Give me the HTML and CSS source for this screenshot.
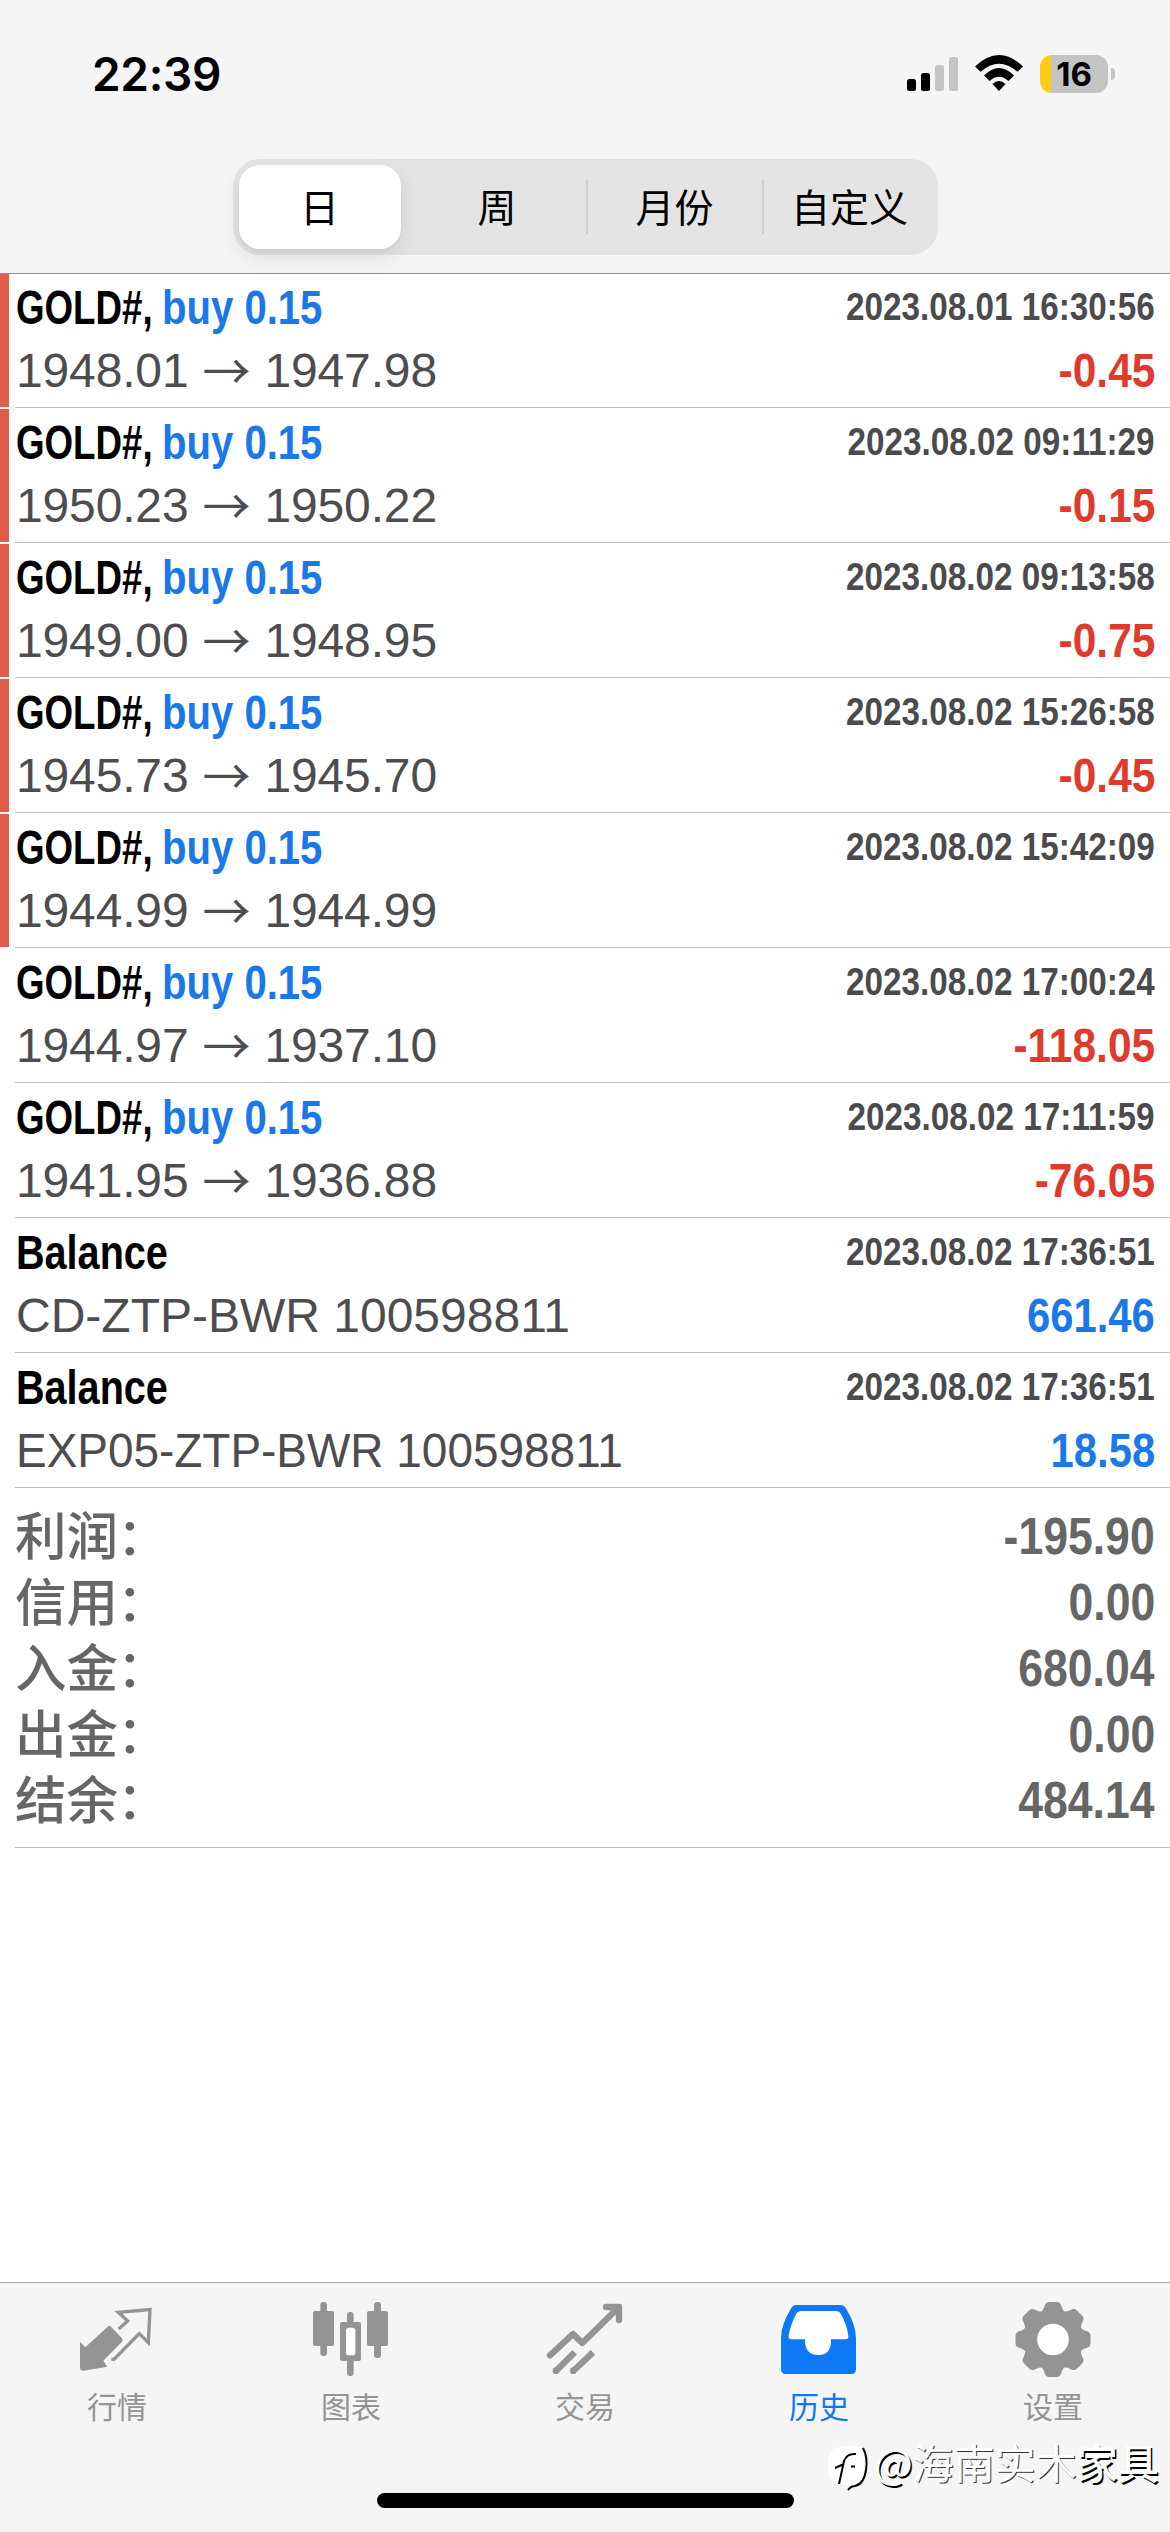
FILE: index.html
```html
<!DOCTYPE html>
<html lang="zh-CN">
<head>
<meta charset="utf-8">
<title>历史</title>
<link rel="stylesheet" href="styles.css">
</head>
<body>
<div class="screen">
  <header class="header">
    <div class="status">
      <span class="clock">22:39</span>
      <div class="status-icons">
        <svg class="signal" viewBox="0 0 51 34"><rect x="0" y="22" width="9" height="12" rx="2.5"/><rect x="14" y="16" width="9" height="18" rx="2.5"/><g fill="#c4c4c4"><rect x="28" y="8" width="9" height="26" rx="2.5"/><rect x="42" y="0" width="9" height="34" rx="2.5"/></g></svg>
        <svg class="wifi" viewBox="0 0 48 36"><path d="M0 11.5 Q24 -11.500 48 11.500 L42.500 16.800 Q24 0.500 5.500 16.800 Z"/><path d="M9 20.500 Q24 5.500 39 20.500 L33.500 26 Q24 17.500 14.500 26 Z"/><path d="M17.500 29 Q24 23 30.500 29 L24 36 Z"/></svg>
        <div class="battery"><span class="battery-body">16</span><i class="battery-nub"></i></div>
      </div>
    </div>
    <nav class="segments">
      <span class="segment selected">日</span>
      <span class="segment">周</span>
      <span class="segment divided">月份</span>
      <span class="segment divided">自定义</span>
    </nav>
  </header>

  <main class="list">
    <article class="row flagged"><div class="line"><span class="symbol">GOLD#,</span><span class="side">buy 0.15</span><time class="date">2023.08.01 16:30:56</time></div><div class="line"><span class="price">1948.01<i class="arrow">→</i>1947.98</span><span class="profit loss">-0.45</span></div></article>
    <article class="row flagged"><div class="line"><span class="symbol">GOLD#,</span><span class="side">buy 0.15</span><time class="date">2023.08.02 09:11:29</time></div><div class="line"><span class="price">1950.23<i class="arrow">→</i>1950.22</span><span class="profit loss">-0.15</span></div></article>
    <article class="row flagged"><div class="line"><span class="symbol">GOLD#,</span><span class="side">buy 0.15</span><time class="date">2023.08.02 09:13:58</time></div><div class="line"><span class="price">1949.00<i class="arrow">→</i>1948.95</span><span class="profit loss">-0.75</span></div></article>
    <article class="row flagged"><div class="line"><span class="symbol">GOLD#,</span><span class="side">buy 0.15</span><time class="date">2023.08.02 15:26:58</time></div><div class="line"><span class="price">1945.73<i class="arrow">→</i>1945.70</span><span class="profit loss">-0.45</span></div></article>
    <article class="row flagged"><div class="line"><span class="symbol">GOLD#,</span><span class="side">buy 0.15</span><time class="date">2023.08.02 15:42:09</time></div><div class="line"><span class="price">1944.99<i class="arrow">→</i>1944.99</span></div></article>
    <article class="row"><div class="line"><span class="symbol">GOLD#,</span><span class="side">buy 0.15</span><time class="date">2023.08.02 17:00:24</time></div><div class="line"><span class="price">1944.97<i class="arrow">→</i>1937.10</span><span class="profit loss">-118.05</span></div></article>
    <article class="row"><div class="line"><span class="symbol">GOLD#,</span><span class="side">buy 0.15</span><time class="date">2023.08.02 17:11:59</time></div><div class="line"><span class="price">1941.95<i class="arrow">→</i>1936.88</span><span class="profit loss">-76.05</span></div></article>
    <article class="row"><div class="line"><span class="balance">Balance</span><time class="date">2023.08.02 17:36:51</time></div><div class="line"><span class="note">CD-ZTP-BWR 100598811</span><span class="profit gain">661.46</span></div></article>
    <article class="row"><div class="line"><span class="balance">Balance</span><time class="date">2023.08.02 17:36:51</time></div><div class="line"><span class="note tight">EXP05-ZTP-BWR 100598811</span><span class="profit gain">18.58</span></div></article>
    <dl class="summary">
      <div class="total"><dt>利润<span class="colon">：</span></dt><dd>-195.90</dd></div>
      <div class="total"><dt>信用<span class="colon">：</span></dt><dd>0.00</dd></div>
      <div class="total"><dt>入金<span class="colon">：</span></dt><dd>680.04</dd></div>
      <div class="total"><dt>出金<span class="colon">：</span></dt><dd>0.00</dd></div>
      <div class="total"><dt>结余<span class="colon">：</span></dt><dd>484.14</dd></div>
    </dl>
  </main>

  <footer class="footer">
    <nav class="tabs">
      <a class="tab"><svg class="tab-icon" viewBox="51 57 240 240"><path d="M60 186 L76 202 L143 140 Q148 135 153 140 L186 175 Q190 180 186 185 L130 242 L142 260 L70 272 Q60 272 60 264 Z"/><path fill="none" stroke="currentColor" stroke-width="10" d="M176 147 L203 123 L175 97 L270 89 L265 188 L238 161 L162 238 H154"/></svg><span>行情</span></a>
      <a class="tab"><svg class="tab-icon" viewBox="753 57 240 240"><rect x="759" y="93" width="63" height="105" rx="6"/><rect x="781" y="66" width="20" height="162" rx="9"/><rect x="921" y="93" width="63" height="105" rx="6"/><rect x="942" y="66" width="21" height="168" rx="9"/><rect x="840" y="126" width="63" height="117" rx="6"/><rect x="861" y="96" width="20" height="192" rx="9"/><rect x="858" y="143" width="28" height="83" rx="8" fill="#fff"/></svg><span>图表</span></a>
      <a class="tab"><svg class="tab-icon" viewBox="75 57 240 240"><g fill="none" stroke="currentColor" stroke-width="19"><path stroke-linecap="round" stroke-linejoin="round" d="M90 226 L159 162 L187 189 L294 84 M258 81 H297 V120"/><path d="M111 270 L164 217 M163 270 L219 217"/></g><path d="M282 72 H299 Q306 72 306 79 V100 Z"/><circle cx="108" cy="272" r="10"/><circle cx="160" cy="272" r="10"/></svg><span>交易</span></a>
      <a class="tab active"><svg class="tab-icon" viewBox="777 57 240 240"><path d="M830 75 H962 Q973 75 979 87 Q1008 135 1008 175 V268 Q1008 282 994 282 H797 Q783 282 783 268 V175 Q783 135 812 87 Q818 75 830 75 Z"/><path fill="#fff" d="M845 93 H946 Q958 93 963 103 Q980 132 985 168 Q986 178 976 178 H933 V186 Q931 225 895 225 Q858 225 855 186 V178 H815 Q805 178 806 168 Q811 136 828 103 Q833 93 845 93 Z"/></svg><span>历史</span></a>
      <a class="tab"><svg class="tab-icon" viewBox="-40 -40.500 80 80"><defs><path id="tooth" d="M-13 -27 C-9 -29 -9 -33 -7.500 -35.500 Q-6.500 -37.500 -4 -37.500 H4 Q6.500 -37.500 7.500 -35.500 C9 -33 9 -29 13 -27 V-20 H-13 Z"/></defs><circle r="22.500" fill="none" stroke="currentColor" stroke-width="13.500"/><use href="#tooth"/><use href="#tooth" transform="rotate(45)"/><use href="#tooth" transform="rotate(90)"/><use href="#tooth" transform="rotate(135)"/><use href="#tooth" transform="rotate(180)"/><use href="#tooth" transform="rotate(225)"/><use href="#tooth" transform="rotate(270)"/><use href="#tooth" transform="rotate(315)"/><circle r="15.500" fill="#fff"/></svg><span>设置</span></a>
    </nav>
    <div class="home-indicator"></div>
    <div class="watermark">
      <svg class="watermark-logo" viewBox="0 0 48 52"><path fill="#fff" d="M7 6 Q20 1 34 4 Q44 12 40 32 Q36 42 24 42 Q8 43 4 34 Q-2 16 7 6 Z"/><g fill="none" stroke="#000" stroke-width="2"><path d="M13 41 L18 18 Q21 10 30 11 M9 25 L18 21 M25 23.500 H29"/><path d="M37 5 Q42 14 40 27 Q38 41 29 43 Q25 43 22 47"/></g></svg>
      <span class="watermark-text"><span class="at">@</span>海南实木<b>家具</b></span>
    </div>
  </footer>
</div>
</body>
</html>
```
FILE: styles.css
```css
* { box-sizing: border-box; }
body { margin: 0; background: #fff; font-family: "Liberation Sans", "Noto Sans CJK SC", sans-serif; }
.screen { width: 1170px; height: 2532px; display: flex; flex-direction: column; overflow: hidden; }

.header { height: 274px; flex: none; background: #f5f5f5; border-bottom: 1px solid #8e8e8e; display: flex; flex-direction: column; align-items: center; }
.status { width: 100%; height: 159px; padding: 55px 55px 0 92px; display: flex; justify-content: space-between; align-items: flex-start; }
.clock { font: 600 46px/39px "Inter", sans-serif; letter-spacing: -0.3px; }
.status-icons { display: flex; align-items: flex-start; height: 38px; }
.signal { width: 51px; height: 34px; margin: 2px 17px 0 0; }
.wifi { width: 48px; height: 36px; margin-right: 17px; }
.battery { display: flex; align-items: center; gap: 3px; }
.battery-body { width: 68px; height: 38px; border-radius: 12px; text-align: center; font: 700 33px/38px "Inter", sans-serif; background: linear-gradient(90deg, #ffcb15 11px, #c4c4c4 11px); }
.battery-nub { width: 4px; height: 12px; border-radius: 0 4px 4px 0; background: #c4c4c4; }

.segments { width: 705px; height: 96px; padding: 6px; border-radius: 27px; background: #e4e4e5; display: grid; grid-template-columns: 170px 177px 176px 1fr; align-items: center; }
.segment { height: 54px; font: 400 39px/50px "Noto Sans CJK SC", sans-serif; text-align: center; }
.segment.divided { border-left: 2px solid #cfcfd1; }
.segment:last-child { padding-left: 4px; }
.segment.selected { width: 162px; height: 84px; line-height: 80px; border-radius: 21px; background: #fff; box-shadow: 0 8px 20px rgba(0, 0, 0, 0.1), 0 2px 3px rgba(0, 0, 0, 0.04); }

.list { flex: 1; margin-top: -1px; }
.row { position: relative; height: 135px; margin-left: 15px; padding-top: 3px; border-bottom: 1px solid #c2c2c4; }
.row.flagged::before { content: ""; position: absolute; left: -15px; top: 1px; width: 9px; height: 133px; background: #e05c4b; }
.line { height: 63px; padding: 0 15px 0 1px; display: flex; align-items: flex-start; font-size: 48px; line-height: 63px; white-space: nowrap; }
.symbol, .side, .balance { font-weight: 700; transform-origin: left; }
.symbol { transform: scaleX(0.765); margin-right: -33px; }
.side { color: #1a78e8; transform: scaleX(0.835); }
.balance { transform: scaleX(0.825); }
.date { margin-left: auto; font-size: 39.5px; font-weight: 700; line-height: 61px; color: #4b4b4e; transform: scaleX(0.842); transform-origin: right; }
.price, .note { color: #4d4d4f; letter-spacing: -0.15px; }
.note { letter-spacing: 0; }
.note.tight { transform: scaleX(0.957); transform-origin: left; }
.arrow { display: inline-block; width: 76px; height: 63px; vertical-align: top; text-align: center; font: normal 48px/58px "Noto Sans CJK SC", sans-serif; }
.profit { margin-left: auto; font-weight: 700; transform: scaleX(0.885); transform-origin: right; }
.loss { color: #df3b2c; }
.gain { color: #1a78e8; transform: scaleX(0.87); }

.summary { height: 360px; margin: 0 0 0 15px; padding: 15px 15px 0 0; border-bottom: 1px solid #c2c2c4; }
.total { height: 66px; display: flex; justify-content: space-between; color: #666; }
.total dt { font: 500 51.500px/60px "Noto Sans CJK SC", sans-serif; }
.total dd { margin: 0; font-size: 51.500px; font-weight: 700; line-height: 66px; transform: scaleX(0.865); transform-origin: right; }
.colon { display: inline-block; transform: translate(-1px, 0); }

.footer { position: relative; height: 250px; flex: none; border-top: 1px solid #aaa; background: #f5f5f5; display: flex; flex-direction: column; align-items: center; justify-content: space-between; padding: 16px 0 24px; }
.tabs { width: 100%; display: grid; grid-template-columns: repeat(5, 1fr); }
.tab { display: flex; flex-direction: column; align-items: center; color: #949494; font: 400 30px/44px "Noto Sans CJK SC", sans-serif; }
.tab span { margin-top: 4px; }
.tab.active { color: #0f78f5; }
.tab-icon { width: 80px; height: 80px; fill: currentColor; }
.home-indicator { width: 417px; height: 15px; border-radius: 8px; background: #000; }
.watermark { position: absolute; left: 826px; top: 155px; display: flex; align-items: flex-start; }
.watermark-logo { width: 48px; height: 52px; margin-top: 5px; }
.watermark-text { font: 400 41px/46px "Noto Sans CJK SC", sans-serif; color: #fff; text-shadow: 1px 1px 0 #333; white-space: nowrap; }
.watermark-text .at { text-shadow: 1.500px 1.500px 0 #000; }
.watermark-text b { font-weight: 500; text-shadow: 1.500px 1.500px 0 #000; }
```
